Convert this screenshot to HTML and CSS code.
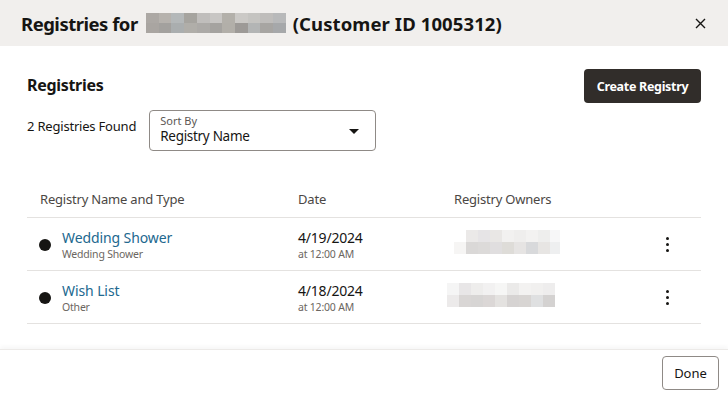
FILE: index.html
```html
<!DOCTYPE html>
<html lang="en">
  <head>
    <meta charset="UTF-8" />
    <meta name="viewport" content="width=device-width, initial-scale=1.0" />
    <title>Registries</title>
    <link rel="stylesheet" href="styles.css">
  </head>
  <body>
    <div class="dialog">
      <div class="dialog-header">
        <h1 class="dialog-title">
          Registries for <span class="blur blur-title"></span> <span class="cust-id">(Customer ID 1005312)</span>
        </h1>
        <button class="close-btn" aria-label="Close">
          <svg width="11" height="11" viewBox="0 0 11 11">
            <path d="M1 1 L10 10 M10 1 L1 10" stroke="#161513" stroke-width="1.4" fill="none" />
          </svg>
        </button>
      </div>

      <div class="dialog-body">
        <div class="section-top">
          <div class="section-left">
            <h2 class="section-title">Registries</h2>
            <div class="filter-row">
              <span class="found">2 Registries Found</span>
              <div class="select">
                <span class="select-label">Sort By</span>
                <span class="select-value">Registry Name</span>
                <span class="caret"></span>
              </div>
            </div>
          </div>
          <button class="primary-btn">Create Registry</button>
        </div>

        <div class="table">
          <div class="row head">
            <div class="cell">Registry Name and Type</div>
            <div class="cell">Date</div>
            <div class="cell">Registry Owners</div>
            <div class="cell"></div>
          </div>

          <div class="row">
            <div class="cell name-cell">
              <span class="dot"></span>
              <div>
                <a class="reg-link" href="#">Wedding Shower</a>
                <div class="sub">Wedding Shower</div>
              </div>
            </div>
            <div class="cell">
              <div class="date">4/19/2024</div>
              <div class="sub">at 12:00 AM</div>
            </div>
            <div class="cell">
              <span class="blur blur-owner1"></span>
            </div>
            <div class="cell kebab-cell">
              <span class="kebab"><i></i><i></i><i></i></span>
            </div>
          </div>

          <div class="row">
            <div class="cell name-cell">
              <span class="dot"></span>
              <div>
                <a class="reg-link" href="#">Wish List</a>
                <div class="sub">Other</div>
              </div>
            </div>
            <div class="cell">
              <div class="date">4/18/2024</div>
              <div class="sub">at 12:00 AM</div>
            </div>
            <div class="cell">
              <span class="blur blur-owner2"></span>
            </div>
            <div class="cell kebab-cell">
              <span class="kebab"><i></i><i></i><i></i></span>
            </div>
          </div>
        </div>
      </div>

      <div class="dialog-footer">
        <button class="secondary-btn">Done</button>
      </div>
    </div>
  </body>
</html>
```

FILE: styles.css
```css
* {
  margin: 0;
  padding: 0;
  box-sizing: border-box;
  font-family: "Noto Sans", sans-serif;
}

body {
  background: #ffffff;
  color: #161513;
  width: 728px;
  height: 397px;
  overflow: hidden;
}

.dialog {
  display: flex;
  flex-direction: column;
  height: 397px;
}

/* header */

.dialog-header {
  background: #f1efed;
  height: 46px;
  display: flex;
  align-items: center;
  justify-content: space-between;
  padding: 0 21px;
}

.dialog-title {
  font-size: 18.5px;
  font-weight: 700;
  letter-spacing: -0.5px;
  display: flex;
  align-items: center;
  gap: 5px;
  color: #161513;
}

.cust-id {
  letter-spacing: 0.1px;
}

.close-btn {
  background: none;
  border: none;
  width: 14px;
  height: 14px;
  display: flex;
  align-items: center;
  justify-content: center;
  cursor: pointer;
}

/* pixelated (masked) data */

.blur {
  display: inline-block;
}

.blur-title {
  width: 140px;
  height: 20px;
  margin: 0 2px 0 3px;
  background:
    linear-gradient(90deg,
      #aca8a4 0 13px, #b6b2ad 13px 25px, #b4b8b9 25px 38px, #a6a49f 38px 51px,
      #c0bebc 51px 64px, #c8c6c4 64px 76px, #b3b0aa 76px 89px, #cbc9c6 89px 102px,
      #c5c4c1 102px 114px, #bfbdbb 114px 127px, #b8b9ba 127px 140px) top / 100% 50% no-repeat,
    linear-gradient(90deg,
      #a9a5a1 0 13px, #a3a19e 13px 25px, #aaaeaf 25px 38px, #b0aea9 38px 51px,
      #acaaa7 51px 64px, #a5a3a0 64px 76px, #b2afa9 76px 89px, #9d9a97 89px 102px,
      #b3b5b5 102px 114px, #a7a5a2 114px 127px, #a6a8aa 127px 140px) bottom / 100% 50% no-repeat;
}

.blur-owner1 {
  width: 106px;
  height: 24px;
  background:
    linear-gradient(90deg,
      #ffffff 0 12px, #ebe9e8 12px 24px, #e6e4e6 24px 36px, #e9e7e5 36px 48px,
      #f2f1f0 48px 60px, #efeeed 60px 72px, #f3f2f1 72px 84px, #eeeeed 84px 96px, #f7f7f8 96px 106px) top / 100% 50% no-repeat,
    linear-gradient(90deg,
      #f6f5f4 0 12px, #dad8d7 12px 24px, #dcdad9 24px 36px, #e0dedf 36px 48px,
      #dedcd8 48px 60px, #e6e4e3 60px 72px, #d8d9db 72px 84px, #e7e5e3 84px 96px, #eeeff0 96px 106px) bottom / 100% 50% no-repeat;
}

.blur-owner2 {
  width: 108px;
  height: 24px;
  margin-left: -7px;
  background:
    linear-gradient(90deg,
      #f5f5f5 0 12px, #e8e6e7 12px 24px, #eeedec 24px 36px, #f2f1f1 36px 48px,
      #f6f6f5 48px 60px, #ebeae9 60px 72px, #f3f2f1 72px 84px, #f1f0ef 84px 96px, #eeeded 96px 108px) top / 100% 50% no-repeat,
    linear-gradient(90deg,
      #eceaea 0 12px, #d9d6d5 12px 24px, #d7d5d4 24px 36px, #dbd7d6 36px 48px,
      #e4e2e0 48px 60px, #d6d3d2 60px 72px, #d8d5d3 72px 84px, #dfe0e1 84px 96px, #d4d2d1 96px 108px) bottom / 100% 50% no-repeat;
}

/* body */

.dialog-body {
  flex: 1;
  padding: 23px 27px 0;
}

.section-top {
  display: flex;
  justify-content: space-between;
  align-items: flex-start;
}

.section-title {
  font-size: 16px;
  font-weight: 700;
  line-height: 22px;
  margin-top: 5px;
  letter-spacing: -0.3px;
}

.filter-row {
  display: flex;
  align-items: flex-start;
  gap: 13px;
  margin-top: 14px;
}

.found {
  font-size: 13px;
  margin-top: 7px;
  letter-spacing: -0.2px;
}

.select {
  position: relative;
  width: 227px;
  height: 41px;
  border: 1px solid #8f8a86;
  border-radius: 4px;
  padding: 3px 10px 0;
  display: flex;
  flex-direction: column;
}

.select-label {
  font-size: 11px;
  line-height: 13px;
  color: #5c5753;
}

.select-value {
  font-size: 13.5px;
  line-height: 19px;
  letter-spacing: -0.3px;
}

.caret {
  position: absolute;
  right: 16px;
  top: 18px;
  width: 0;
  height: 0;
  border-left: 5px solid transparent;
  border-right: 5px solid transparent;
  border-top: 5px solid #161513;
}

.primary-btn {
  background: #312d2a;
  color: #ffffff;
  border: none;
  border-radius: 4px;
  width: 117px;
  height: 34px;
  font-size: 12.5px;
  font-weight: 700;
  letter-spacing: -0.3px;
  cursor: pointer;
}

/* table */

.table {
  margin-top: 30px;
}

.row {
  display: grid;
  grid-template-columns: 258px 156px 1fr 60px;
  align-items: center;
  height: 53px;
  border-bottom: 1px solid #e4e2e0;
}

.row.head {
  height: 37px;
  font-size: 13px;
  color: #4b4744;
  letter-spacing: -0.2px;
}

.cell {
  padding-left: 13px;
}

.name-cell {
  display: flex;
  align-items: center;
  gap: 11px;
  padding-left: 12px;
}

.dot {
  width: 12px;
  height: 12px;
  border-radius: 50%;
  background: #161513;
  flex-shrink: 0;
  margin-top: 1px;
}

.reg-link {
  color: #22688f;
  text-decoration: none;
  font-size: 14px;
  line-height: 19px;
  letter-spacing: -0.1px;
  display: block;
}

.sub {
  font-size: 10.5px;
  line-height: 14px;
  color: #6b6661;
  letter-spacing: -0.2px;
}

.date {
  font-size: 14px;
  line-height: 19px;
  letter-spacing: -0.2px;
  color: #161513;
}

.kebab-cell {
  display: flex;
  justify-content: flex-start;
  padding-left: 25px;
}

.kebab {
  display: flex;
  flex-direction: column;
  gap: 3px;
}

.kebab i {
  display: block;
  width: 3px;
  height: 3px;
  border-radius: 50%;
  background: #161513;
}

/* footer */

.dialog-footer {
  height: 48px;
  border-top: 1px solid #eceae8;
  box-shadow: 0 -3px 4px rgba(0, 0, 0, 0.03);
  display: flex;
  justify-content: flex-end;
  align-items: flex-start;
  padding: 6px 9px 0;
}

.secondary-btn {
  background: #ffffff;
  border: 1px solid #8f8a86;
  border-radius: 4px;
  width: 57px;
  height: 34px;
  font-size: 13px;
  color: #161513;
  cursor: pointer;
}
```
